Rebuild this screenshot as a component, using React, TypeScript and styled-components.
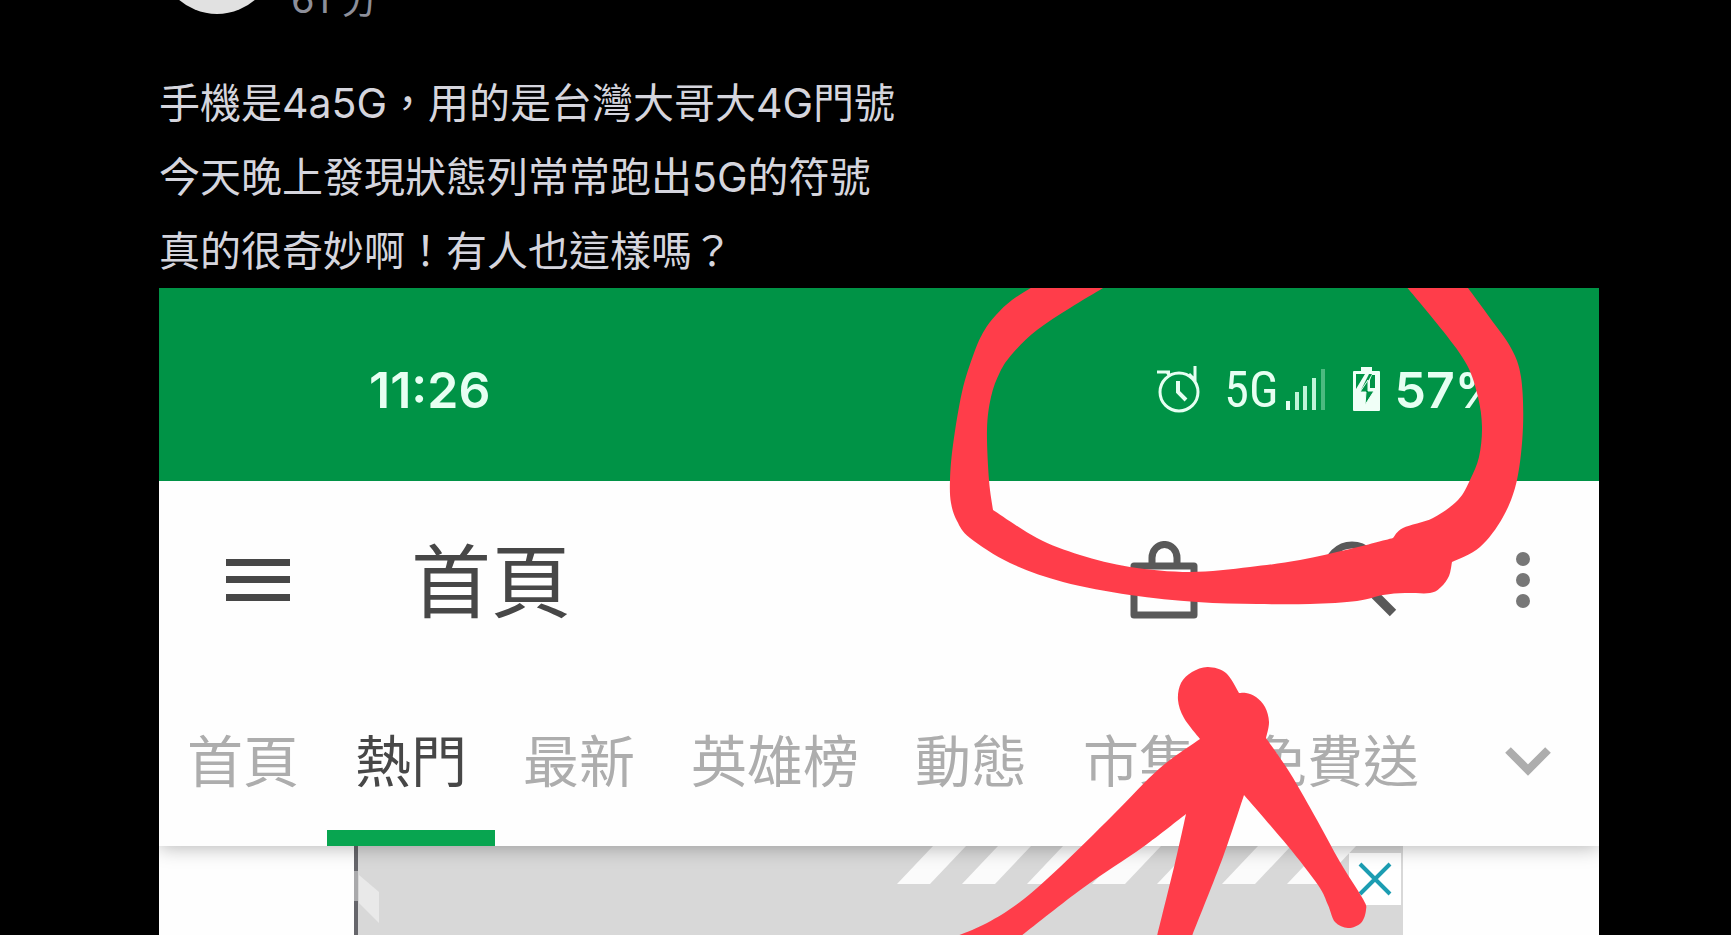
import React from "react";
import styled, { createGlobalStyle } from "styled-components";

const GlobalStyle = createGlobalStyle`
  * { box-sizing: border-box; }
  body { margin: 0; background: #000; }
  button { border: 0; padding: 0; background: none; font: inherit; color: inherit; cursor: pointer; }
  svg { display: block; flex: none; }
`;

const cjk = `"Noto Sans CJK TC", sans-serif`;

const Post = styled.article`
  padding: 0 132px 0 159px;
  font-family: Inter, ${cjk};
`;

const PostHeader = styled.header`
  height: 20px;
  overflow: hidden;
  display: flex;
  align-items: flex-end;
  gap: 16px;
`;

const Avatar = styled.div`
  flex: none;
  width: 116px;
  height: 116px;
  margin-bottom: 6px;
  border-radius: 50%;
  background: #e1e1e1;
`;

const PostTime = styled.time`
  font-size: 38px;
  line-height: 42px;
  color: #8d8f9a;
`;

const PostText = styled.p`
  margin: 0;
  padding-top: 46px;
  font-size: 41px;
  line-height: 74px;
  color: #d5d5dd;
`;

const Shot = styled.section`
  position: relative;
  overflow: hidden;
  background: #fefefe;
  font-family: ${cjk};
`;

const StatusBar = styled.div`
  height: 193px;
  padding: 10px 94px 0 210px;
  display: flex;
  align-items: center;
  justify-content: space-between;
  background: #009346;
  color: #e6fff2;
`;

const StatusText = styled.span`
  font-family: Inter, sans-serif;
  font-size: 50px;
  font-weight: 600;
  line-height: 60px;
`;

const NetworkText = styled.span`
  font-family: "Roboto Condensed", Roboto, sans-serif;
  font-size: 50px;
  line-height: 60px;
`;

const StatusIcons = styled.div`
  display: flex;
  align-items: center;
`;

const Network = styled.div`
  display: flex;
  align-items: center;
  gap: 7px;
  margin: 0 26px 0 24px;
`;

const Battery = styled.div`
  display: flex;
  align-items: center;
  gap: 14px;
`;

const AppBar = styled.div`
  height: 197px;
  padding: 0 68px 0 67px;
  display: flex;
  align-items: center;
  color: #474747;
`;

const Title = styled.h1`
  margin: 0 auto 0 121px;
  padding-bottom: 8px;
  font-size: 80px;
  font-weight: 400;
  line-height: 96px;
`;

const IconButton = styled.button<{ $gap?: number }>`
  margin-left: ${(p) => p.$gap ?? 0}px;
`;

const Tabs = styled.nav`
  position: relative;
  z-index: 1;
  height: 168px;
  display: flex;
  background: #fefefe;
  box-shadow: 0 2px 18px rgba(0, 0, 0, 0.28);
  clip-path: inset(0 0 -30px 0);
`;

const Tab = styled.button<{ $active?: boolean }>`
  flex: none;
  padding: 0 28px 8px;
  font-size: 56px;
  line-height: 80px;
  color: ${(p) => (p.$active ? "#474747" : "#adadad")};
  box-shadow: ${(p) => (p.$active ? "inset 0 -16px 0 #08a550" : "none")};
`;

const MoreTabs = styled.button`
  margin: 0 48px 0 auto;
  color: #adadad;
`;

const Banner = styled.aside`
  position: relative;
  height: 89px;
  margin: 0 196px 0 195px;
  overflow: hidden;
  background: #d8d8d8;
`;

const CloseAd = styled.button`
  position: absolute;
  top: 7px;
  right: 2px;
  width: 52px;
  height: 52px;
  display: grid;
  place-items: center;
  background: #fff;
`;

const BannerArt = styled.svg`
  position: absolute;
  top: 0;
  left: 0;
`;

const Marker = styled.svg`
  position: absolute;
  z-index: 2;
  top: 0;
  right: 0;
  pointer-events: none;
`;

type Point = [number, number];

/* Smooth closed outline through the points; a repeated point makes a corner. */
function outline(pts: Point[]): string {
  const n = pts.length;
  let d = `M${pts[0][0]} ${pts[0][1]}`;
  for (let i = 0; i < n - 1; i++) {
    const p0 = pts[Math.max(i - 1, 0)];
    const p1 = pts[i];
    const p2 = pts[i + 1];
    const p3 = pts[Math.min(i + 2, n - 1)];
    if (p1[0] === p2[0] && p1[1] === p2[1]) continue;
    d += `C${p1[0] + (p2[0] - p0[0]) / 6} ${p1[1] + (p2[1] - p0[1]) / 6} ${
      p2[0] - (p3[0] - p1[0]) / 6
    } ${p2[1] - (p3[1] - p1[1]) / 6} ${p2[0]} ${p2[1]}`;
  }
  return d + "Z";
}

const ring: Point[] = [
  [1034, 286], [1012, 300], [996, 315], [984, 331], [974, 353], [962, 392], [953, 445], [950, 480],
  [951, 503], [957, 521], [970, 538], [1010, 563], [1063, 582], [1130, 595], [1197, 602], [1257, 604],
  [1310, 604], [1357, 601], [1383, 595], [1405, 593], [1430, 593], [1441, 587], [1449, 576], [1452, 562],
  [1452, 562], [1480, 547], [1503, 517], [1517, 480],
  [1523, 427], [1521, 377], [1511, 348], [1490, 318], [1468, 288], [1466, 285], [1466, 285],
  [1405, 285], [1405, 285], [1443, 331], [1467, 365], [1478, 397], [1482, 427], [1479, 457], [1470, 480],
  [1458, 500], [1433, 518], [1403, 528], [1393, 538], [1393, 538], [1350, 549], [1300, 560], [1250, 567],
  [1190, 572], [1130, 567], [1080, 555], [1037, 538], [993, 510], [993, 510], [989, 480], [987, 430],
  [991, 397], [1000, 372], [1013, 353], [1037, 330], [1070, 308], [1103, 288], [1107, 285], [1107, 285],
];

const arrow: Point[] = [
  [957, 936], [987, 923], [1020, 902], [1060, 867], [1113, 815], [1160, 768], [1200, 739], [1200, 739],
  [1184, 718], [1178, 700], [1181, 683], [1192, 672], [1208, 667], [1226, 673], [1239, 693], [1239, 693],
  [1246, 693], [1256, 697], [1265, 707], [1269, 722], [1266, 738], [1266, 738], [1290, 773], [1317, 820], [1340, 862],
  [1363, 899], [1366, 910], [1361, 923], [1348, 928], [1335, 922], [1328, 905], [1318, 885], [1287, 845],
  [1244, 795], [1244, 795], [1223, 857], [1192, 936], [1192, 936], [1157, 936], [1157, 936], [1175, 863],
  [1186, 814], [1186, 814], [1143, 847], [1083, 888], [1021, 936], [1021, 936],
];

const AlarmIcon = () => (
  <svg width="44" height="48" viewBox="0 0 44 48" fill="none" stroke="currentColor" strokeWidth="3">
    <ellipse cx="23" cy="26" rx="19" ry="19" />
    <path d="M1 6h13M11 6l3 4M39 0v15M33 8l6 6" />
    <path d="M22 15v11l8 8" strokeWidth="4" />
  </svg>
);

const SignalIcon = () => (
  <svg width="40" height="44" viewBox="0 0 40 44" fill="#bff5d8">
    <path d="M0 33h4v9H0z" fill="#e6fff2" />
    <path d="M9 24h4v18H9zM17 18h4v24h-4zM26 10h4v32h-4z" />
    <path d="M35 1h4v41h-4z" opacity=".4" />
  </svg>
);

const BatteryIcon = () => (
  <svg width="29" height="48" viewBox="0 0 29 48">
    <path d="M9 1h11v4h7q1 0 1 1v38q0 1-1 1H2q-1 0-1-1V6q0-1 1-1h7z" fill="#f0fff7" />
    <path d="M4 8h9L4 23zM17 8h3L11 24h-2zM18 14v8h5V9h-3z" fill="#009346" />
    <path d="M16 14L8 26h6l-1 13 9-14h-6z" fill="#009346" stroke="#f0fff7" strokeWidth="1" />
  </svg>
);

const MenuIcon = () => (
  <svg width="64" height="42" viewBox="0 0 64 42" fill="currentColor">
    <path d="M0 0h64v7H0zM0 17h64v7H0zM0 35h64v7H0z" />
  </svg>
);

const BagIcon = () => (
  <svg width="68" height="78" viewBox="0 0 68 78" fill="none" stroke="#595959" strokeWidth="7" strokeLinejoin="round">
    <path d="M4 25h60v49H4zM22 25v-8a12 13 0 0 1 25 0v8" />
  </svg>
);

const SearchIcon = () => (
  <svg width="77" height="77" viewBox="0 0 77 77" fill="none" stroke="#595959" strokeWidth="7">
    <circle cx="32" cy="29" r="25" />
    <path d="M47 46L73 72" strokeWidth="9" />
  </svg>
);

const MoreIcon = () => (
  <svg width="16" height="58" viewBox="0 0 16 58" fill="#777">
    <circle cx="8" cy="8" r="7" />
    <circle cx="8" cy="29" r="7" />
    <circle cx="8" cy="50" r="7" />
  </svg>
);

const ChevronIcon = () => (
  <svg width="46" height="30" viewBox="0 0 46 30" fill="none" stroke="currentColor" strokeWidth="8">
    <path d="M3 3l20 20L43 3" />
  </svg>
);

const tabs = ["首頁", "熱門", "最新", "英雄榜", "動態", "市集", "免費送"];
const stripes = [0, 1, 2, 3, 4, 5, 6];

export default function App() {
  return (
    <>
      <GlobalStyle />
      <Post lang="zh-Hant">
        <PostHeader>
          <Avatar />
          <PostTime>61 分</PostTime>
        </PostHeader>
        <PostText>
          手機是4a5G，用的是台灣大哥大4G門號
          <br />
          今天晚上發現狀態列常常跑出5G的符號
          <br />
          真的很奇妙啊！有人也這樣嗎？
        </PostText>
        <Shot>
          <StatusBar>
            <StatusText>11:26</StatusText>
            <StatusIcons>
              <AlarmIcon />
              <Network>
                <NetworkText>5G</NetworkText>
                <SignalIcon />
              </Network>
              <Battery>
                <BatteryIcon />
                <StatusText>57%</StatusText>
              </Battery>
            </StatusIcons>
          </StatusBar>
          <AppBar>
            <IconButton aria-label="選單"><MenuIcon /></IconButton>
            <Title>首頁</Title>
            <IconButton aria-label="購物袋"><BagIcon /></IconButton>
            <IconButton aria-label="搜尋" $gap={122}><SearchIcon /></IconButton>
            <IconButton aria-label="更多" $gap={118}><MoreIcon /></IconButton>
          </AppBar>
          <Tabs>
            {tabs.map((name) => (
              <Tab key={name} $active={name === "熱門"}>{name}</Tab>
            ))}
            <MoreTabs aria-label="展開分類"><ChevronIcon /></MoreTabs>
          </Tabs>
          <Banner>
            <BannerArt width="1049" height="89" viewBox="354 846 1049 89">
              <path d="M354 846h4v89h-4z" fill="#66666b" />
              <path d="M354 871h4v30h-4z" fill="#a9a9ab" />
              <path d="M359 875l20 17v31l-20-20z" fill="#e9e9e9" />
              {stripes.map((i) => (
                <path key={i} d={`M${897 + i * 65} 884l36-38h33l-36 38z`} fill="#fbfbfb" />
              ))}
            </BannerArt>
            <CloseAd aria-label="關閉廣告">
              <svg width="34" height="34" viewBox="0 0 34 34" stroke="#1c9db2" strokeWidth="4">
                <path d="M2 2l30 30M32 2L2 32" />
              </svg>
            </CloseAd>
          </Banner>
          <Marker width="1440" height="647" viewBox="159 288 1440 647" fill="#ff3d4a">
            <path d={outline(ring)} />
            <path d={outline(arrow)} />
          </Marker>
        </Shot>
      </Post>
    </>
  );
}
